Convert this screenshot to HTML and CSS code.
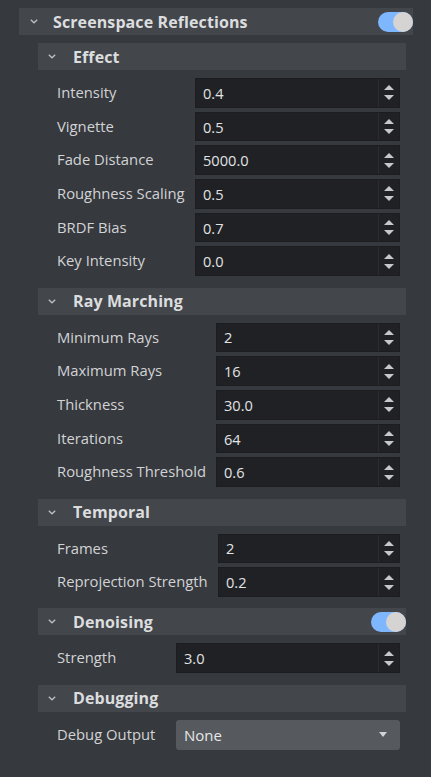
FILE: index.html
```html
<!DOCTYPE html>
<html>
<head>
<meta charset="utf-8">
<link rel="stylesheet" href="styles.css">
</head>
<body>
<div class="panel">
  <div class="head head-main">
    <svg class="chev" viewBox="0 0 8 5" width="8" height="5"><path d="M0.8 0.8 L4 3.8 L7.2 0.8" fill="none" stroke="#bdbfc2" stroke-width="1.3"/></svg>
    <span class="title main-title">Screenspace Reflections</span>
    <span class="toggle"><span class="knob"></span></span>
  </div>

  <div class="sections">
    <div class="section">
      <div class="head">
        <svg class="chev" viewBox="0 0 8 5" width="8" height="5"><path d="M0.8 0.8 L4 3.8 L7.2 0.8" fill="none" stroke="#bdbfc2" stroke-width="1.3"/></svg>
        <span class="title">Effect</span>
      </div>
      <div class="body lw-effect">
        <div class="row"><span class="label">Intensity</span><div class="num"><span class="val">0.4</span><span class="spin"><i class="up"></i><i class="down"></i></span></div></div>
        <div class="row"><span class="label">Vignette</span><div class="num"><span class="val">0.5</span><span class="spin"><i class="up"></i><i class="down"></i></span></div></div>
        <div class="row"><span class="label">Fade Distance</span><div class="num"><span class="val">5000.0</span><span class="spin"><i class="up"></i><i class="down"></i></span></div></div>
        <div class="row"><span class="label">Roughness Scaling</span><div class="num"><span class="val">0.5</span><span class="spin"><i class="up"></i><i class="down"></i></span></div></div>
        <div class="row"><span class="label">BRDF Bias</span><div class="num"><span class="val">0.7</span><span class="spin"><i class="up"></i><i class="down"></i></span></div></div>
        <div class="row"><span class="label">Key Intensity</span><div class="num"><span class="val">0.0</span><span class="spin"><i class="up"></i><i class="down"></i></span></div></div>
      </div>
    </div>

    <div class="section">
      <div class="head">
        <svg class="chev" viewBox="0 0 8 5" width="8" height="5"><path d="M0.8 0.8 L4 3.8 L7.2 0.8" fill="none" stroke="#bdbfc2" stroke-width="1.3"/></svg>
        <span class="title">Ray Marching</span>
      </div>
      <div class="body lw-ray">
        <div class="row"><span class="label">Minimum Rays</span><div class="num"><span class="val">2</span><span class="spin"><i class="up"></i><i class="down"></i></span></div></div>
        <div class="row"><span class="label">Maximum Rays</span><div class="num"><span class="val">16</span><span class="spin"><i class="up"></i><i class="down"></i></span></div></div>
        <div class="row"><span class="label">Thickness</span><div class="num"><span class="val">30.0</span><span class="spin"><i class="up"></i><i class="down"></i></span></div></div>
        <div class="row"><span class="label">Iterations</span><div class="num"><span class="val">64</span><span class="spin"><i class="up"></i><i class="down"></i></span></div></div>
        <div class="row"><span class="label">Roughness Threshold</span><div class="num"><span class="val">0.6</span><span class="spin"><i class="up"></i><i class="down"></i></span></div></div>
      </div>
    </div>

    <div class="section">
      <div class="head">
        <svg class="chev" viewBox="0 0 8 5" width="8" height="5"><path d="M0.8 0.8 L4 3.8 L7.2 0.8" fill="none" stroke="#bdbfc2" stroke-width="1.3"/></svg>
        <span class="title">Temporal</span>
      </div>
      <div class="body lw-temporal">
        <div class="row"><span class="label">Frames</span><div class="num"><span class="val">2</span><span class="spin"><i class="up"></i><i class="down"></i></span></div></div>
        <div class="row"><span class="label">Reprojection Strength</span><div class="num"><span class="val">0.2</span><span class="spin"><i class="up"></i><i class="down"></i></span></div></div>
      </div>
    </div>

    <div class="section">
      <div class="head">
        <svg class="chev" viewBox="0 0 8 5" width="8" height="5"><path d="M0.8 0.8 L4 3.8 L7.2 0.8" fill="none" stroke="#bdbfc2" stroke-width="1.3"/></svg>
        <span class="title">Denoising</span>
        <span class="toggle"><span class="knob"></span></span>
      </div>
      <div class="body lw-short">
        <div class="row"><span class="label">Strength</span><div class="num"><span class="val">3.0</span><span class="spin"><i class="up"></i><i class="down"></i></span></div></div>
      </div>
    </div>

    <div class="section">
      <div class="head">
        <svg class="chev" viewBox="0 0 8 5" width="8" height="5"><path d="M0.8 0.8 L4 3.8 L7.2 0.8" fill="none" stroke="#bdbfc2" stroke-width="1.3"/></svg>
        <span class="title">Debugging</span>
      </div>
      <div class="body lw-short">
        <div class="row"><span class="label">Debug Output</span><div class="select"><span class="val">None</span><i class="caret"></i></div></div>
      </div>
    </div>
  </div>
</div>
</body>
</html>
```

FILE: styles.css
```css
html, body {
  margin: 0;
  padding: 0;
  background: #36393e;
  height: 100%;
}
body {
  font-family: "Open Sans", "Noto Sans", sans-serif;
  color: #d4d5d7;
}
.panel {
  margin: 8px 18px 0 19px;
  width: 394px;
}
.head {
  height: 27px;
  background: #43464b;
  display: flex;
  align-items: center;
  position: relative;
}
.head .chev {
  margin-left: 10px;
  flex: none;
}
.head .title {
  margin-left: 17px;
  font-weight: 700;
  font-size: 16px;
  color: #dcdddf;
  letter-spacing: 0.1px;
}
.head-main .chev {
  margin-left: 11px;
}
.head-main .title {
  margin-left: 15px;
}
.toggle {
  margin-left: auto;
  width: 35px;
  height: 20px;
  border-radius: 10px;
  background: #7fb7fe;
  display: flex;
  justify-content: flex-end;
}
.knob {
  width: 20px;
  height: 20px;
  border-radius: 50%;
  background: #d6d3d3;
}
.sections {
  margin: 8px 7px 0 19px;
}
.section {
  margin-bottom: 11.5px;
}
.body {
  padding-top: 8px;
  display: grid;
  grid-template-columns: var(--lw) 1fr;
  row-gap: 4px;
  padding-left: 19px;
  padding-right: 6px;
}
.lw-effect { --lw: 138px; }
.lw-ray { --lw: 159px; }
.lw-temporal { --lw: 161px; }
.lw-short { --lw: 119px; }
.row {
  display: contents;
}
.label {
  font-size: 14.8px;
  color: #d2d3d5;
  height: 29.7px;
  line-height: 29.7px;
  white-space: nowrap;
}
.num {
  height: 29.7px;
  background: #1f2125;
  display: flex;
  align-items: center;
  box-sizing: border-box;
  border: 1px solid #1b1d20;
}
.num .val, .select .val {
  flex: 1;
  padding-left: 7px;
  font-size: 14.6px;
  color: #e2e3e5;
}
.spin {
  width: 20px;
  height: 100%;
  border-left: 1px solid #2a2c30;
  display: flex;
  flex-direction: column;
  align-items: center;
  justify-content: center;
  gap: 5px;
}
.spin i {
  display: block;
  width: 0;
  height: 0;
  border-left: 5px solid transparent;
  border-right: 5px solid transparent;
}
.spin .up { border-bottom: 5px solid #c7c8ca; }
.spin .down { border-top: 5px solid #c7c8ca; }
.select {
  height: 30.7px;
  background: #56595d;
  border-radius: 3px;
  display: flex;
  align-items: center;
}
.select .val {
  padding-left: 8px;
  font-size: 15px;
  color: #e6e7e8;
}
.caret {
  display: block;
  width: 0;
  height: 0;
  margin-right: 13px;
  border-left: 4px solid transparent;
  border-right: 4px solid transparent;
  border-top: 5px solid #d2d3d5;
}
```
